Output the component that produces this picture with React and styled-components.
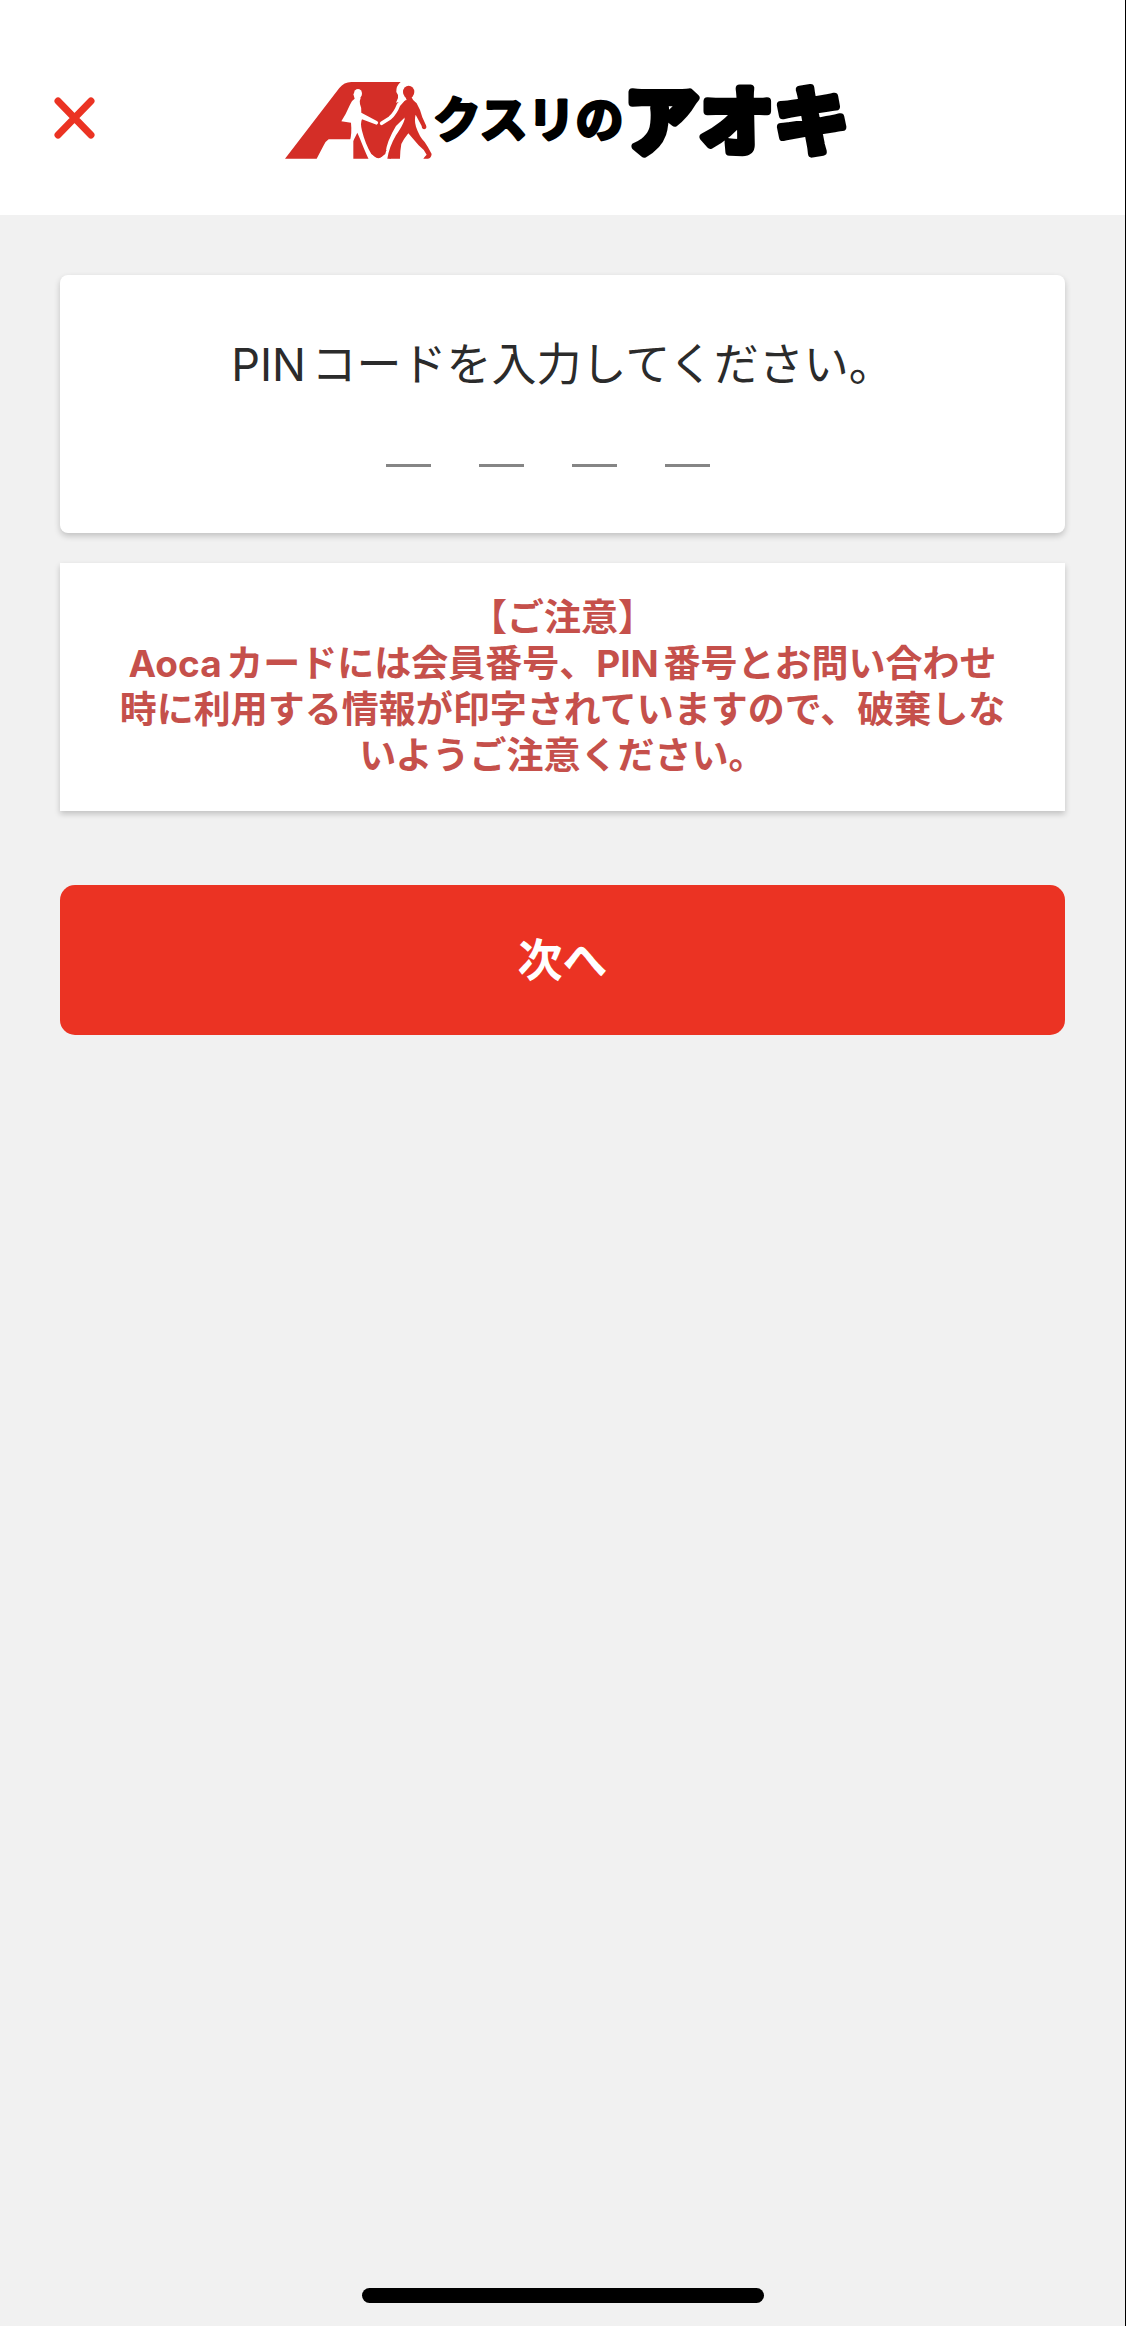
import React, { useState } from "react"
import styled, { createGlobalStyle } from "styled-components"

const GlobalStyle = createGlobalStyle`
  * {
    box-sizing: border-box;
  }
  body {
    margin: 0;
    background: #f1f1f1;
    color: #2b2b2b;
    font-family: Inter, "Noto Sans CJK JP", sans-serif;
    text-autospace: normal;
  }
`

const PageStyles = styled.div`
  display: flex;
  flex-direction: column;
  min-height: 100vh;
  border-right: 1px solid #000;
`

const HeaderStyles = styled.header`
  display: grid;
  grid-template-columns: 1fr auto 1fr;
  align-items: start;
  padding: 80px 48px 55px;
  background: #fff;
  svg {
    display: block;
    overflow: visible;
  }
`

const CloseButton = styled.button`
  justify-self: start;
  padding: 17px 6px;
  border: 0;
  background: none;
  color: #eb3323;
  cursor: pointer;
`

const MainStyles = styled.main`
  flex: 1;
  padding: 60px;
`

const Card = styled.section`
  padding: ${props => (props.$rounded ? "60px 60px 66px" : "32px 55px")};
  border-radius: ${props => (props.$rounded ? "8px" : "0")};
  background: #fff;
  box-shadow: 0 3px 6px rgba(0, 0, 0, 0.2);
  text-align: center;
  & + & {
    margin-top: 30px;
  }
`

const PinTitle = styled.h1`
  margin: 0 0 12px;
  font-size: 45px;
  font-weight: 400;
  line-height: 60px;
`

const PinFields = styled.div`
  display: flex;
  justify-content: center;
  gap: 18px;
`

const PinInput = styled.input`
  width: 45px;
  height: 60px;
  margin: 0 30px 0 0;
  padding: 0;
  border: 0;
  border-bottom: 3px solid #858585;
  border-radius: 0;
  outline: 0;
  background: none;
  font: inherit;
  font-size: 45px;
  text-align: center;
`

const Notice = styled.p`
  margin: 0;
  color: #c5504b;
  font-size: 37px;
  font-weight: 700;
  line-height: 46px;
`

const NextButton = styled.button`
  display: block;
  width: 100%;
  height: 150px;
  margin-top: 74px;
  padding: 0 0 6px;
  border: 0;
  border-radius: 15px;
  background: #eb3323;
  color: #fff;
  font: inherit;
  font-size: 45px;
  font-weight: 700;
  cursor: pointer;
`

const HomeIndicator = styled.div`
  width: 402px;
  height: 15px;
  margin: 0 auto 23px;
  border-radius: 8px;
  background: #000;
`

const LogoText = styled.text`
  font-family: "Noto Sans CJK JP", sans-serif;
  font-size: ${props => (props.$large ? "75px" : "48px")};
  font-weight: 700;
  fill: #000;
  stroke: #000;
  stroke-width: ${props => (props.$large ? "8px" : "3px")};
  stroke-linejoin: round;
`

function Logo() {
  return (
    <svg width="570" height="80" viewBox="-6 0 570 80" role="img" aria-label="クスリのアオキ">
      <g transform="translate(-14 -10) scale(0.3333)">
        {/* the big A */}
        <path
          fill="#d42e27"
          d="M45 266L208 54Q222 36 244 36H392Q378 48 379 66Q386 74 384 84L378 98L410 90V150L362 266H250V208H176Q166 214 160 228L140 266Z"
        />
        {/* left figure */}
        <g fill="#fff">
          <ellipse cx="264" cy="71" rx="12" ry="14" />
          <path d="M250 72L260 62L272 84Q268 92 270 102Q276 116 274 128L322 154Q328 160 320 164L276 148Q270 160 276 182Q286 222 304 252Q325 272 346 252Q350 214 378 168L405 142L410 152Q400 166 386 186Q370 222 358 268H296Q280 232 270 206L262 188L250 212L240 212Q246 190 243 158L214 154Q228 132 240 104Q246 90 254 86Z" />
        </g>
        <path fill="#d42e27" d="M300 240Q325 290 350 240Z" />
        {/* right figure */}
        <path
          fill="none"
          stroke="#fff"
          strokeWidth="11"
          strokeLinecap="round"
          strokeLinejoin="round"
          d="M404 84L386 104Q376 130 360 144L335 160"
        />
        <g fill="#d42e27">
          <ellipse cx="416" cy="66" rx="17" ry="19" />
          <path d="M406 80H424Q428 92 440 100Q452 120 457 142L468 166Q472 176 463 178Q456 178 455 168L437 134Q432 150 438 170Q448 200 464 216Q474 230 485 252Q484 264 474 266H460Q464 260 470 254Q462 238 446 226L415 190Q402 206 394 222Q390 244 390 266H352Q358 230 378 196Q398 168 404 148L398 110Q400 96 410 90Z" />
        </g>
      </g>
      <LogoText x="149" y="57">クスリの</LogoText>
      <LogoText x="340" y="69" $large>アオキ</LogoText>
    </svg>
  )
}

export default function App() {
  const [pin, setPin] = useState(["", "", "", ""])

  const updateDigit = (index, value) => {
    setPin(pin.map((digit, i) => (i === index ? value : digit)))
  }

  return (
    <PageStyles>
      <GlobalStyle />
      <HeaderStyles>
        <CloseButton type="button" aria-label="閉じる">
          <svg width="42" height="42" viewBox="0 0 42 42">
            <path d="M4 4L37 38M37 4L4 38" stroke="currentColor" strokeWidth="7" strokeLinecap="round" />
          </svg>
        </CloseButton>
        <Logo />
      </HeaderStyles>
      <MainStyles>
        <Card $rounded>
          <PinTitle>PINコードを入力してください。</PinTitle>
          <PinFields>
            {pin.map((digit, index) => (
              <PinInput
                key={index}
                type="text"
                inputMode="numeric"
                maxLength={1}
                aria-label={`PIN ${index + 1}`}
                value={digit}
                onChange={e => updateDigit(index, e.target.value)}
              />
            ))}
          </PinFields>
        </Card>
        <Card>
          <Notice>
            【ご注意】
            <br />
            Aocaカードには会員番号、PIN番号とお問い合わせ時に利用する情報が印字されていますので、破棄しないようご注意ください。
          </Notice>
        </Card>
        <NextButton type="button">次へ</NextButton>
      </MainStyles>
      <HomeIndicator />
    </PageStyles>
  )
}
